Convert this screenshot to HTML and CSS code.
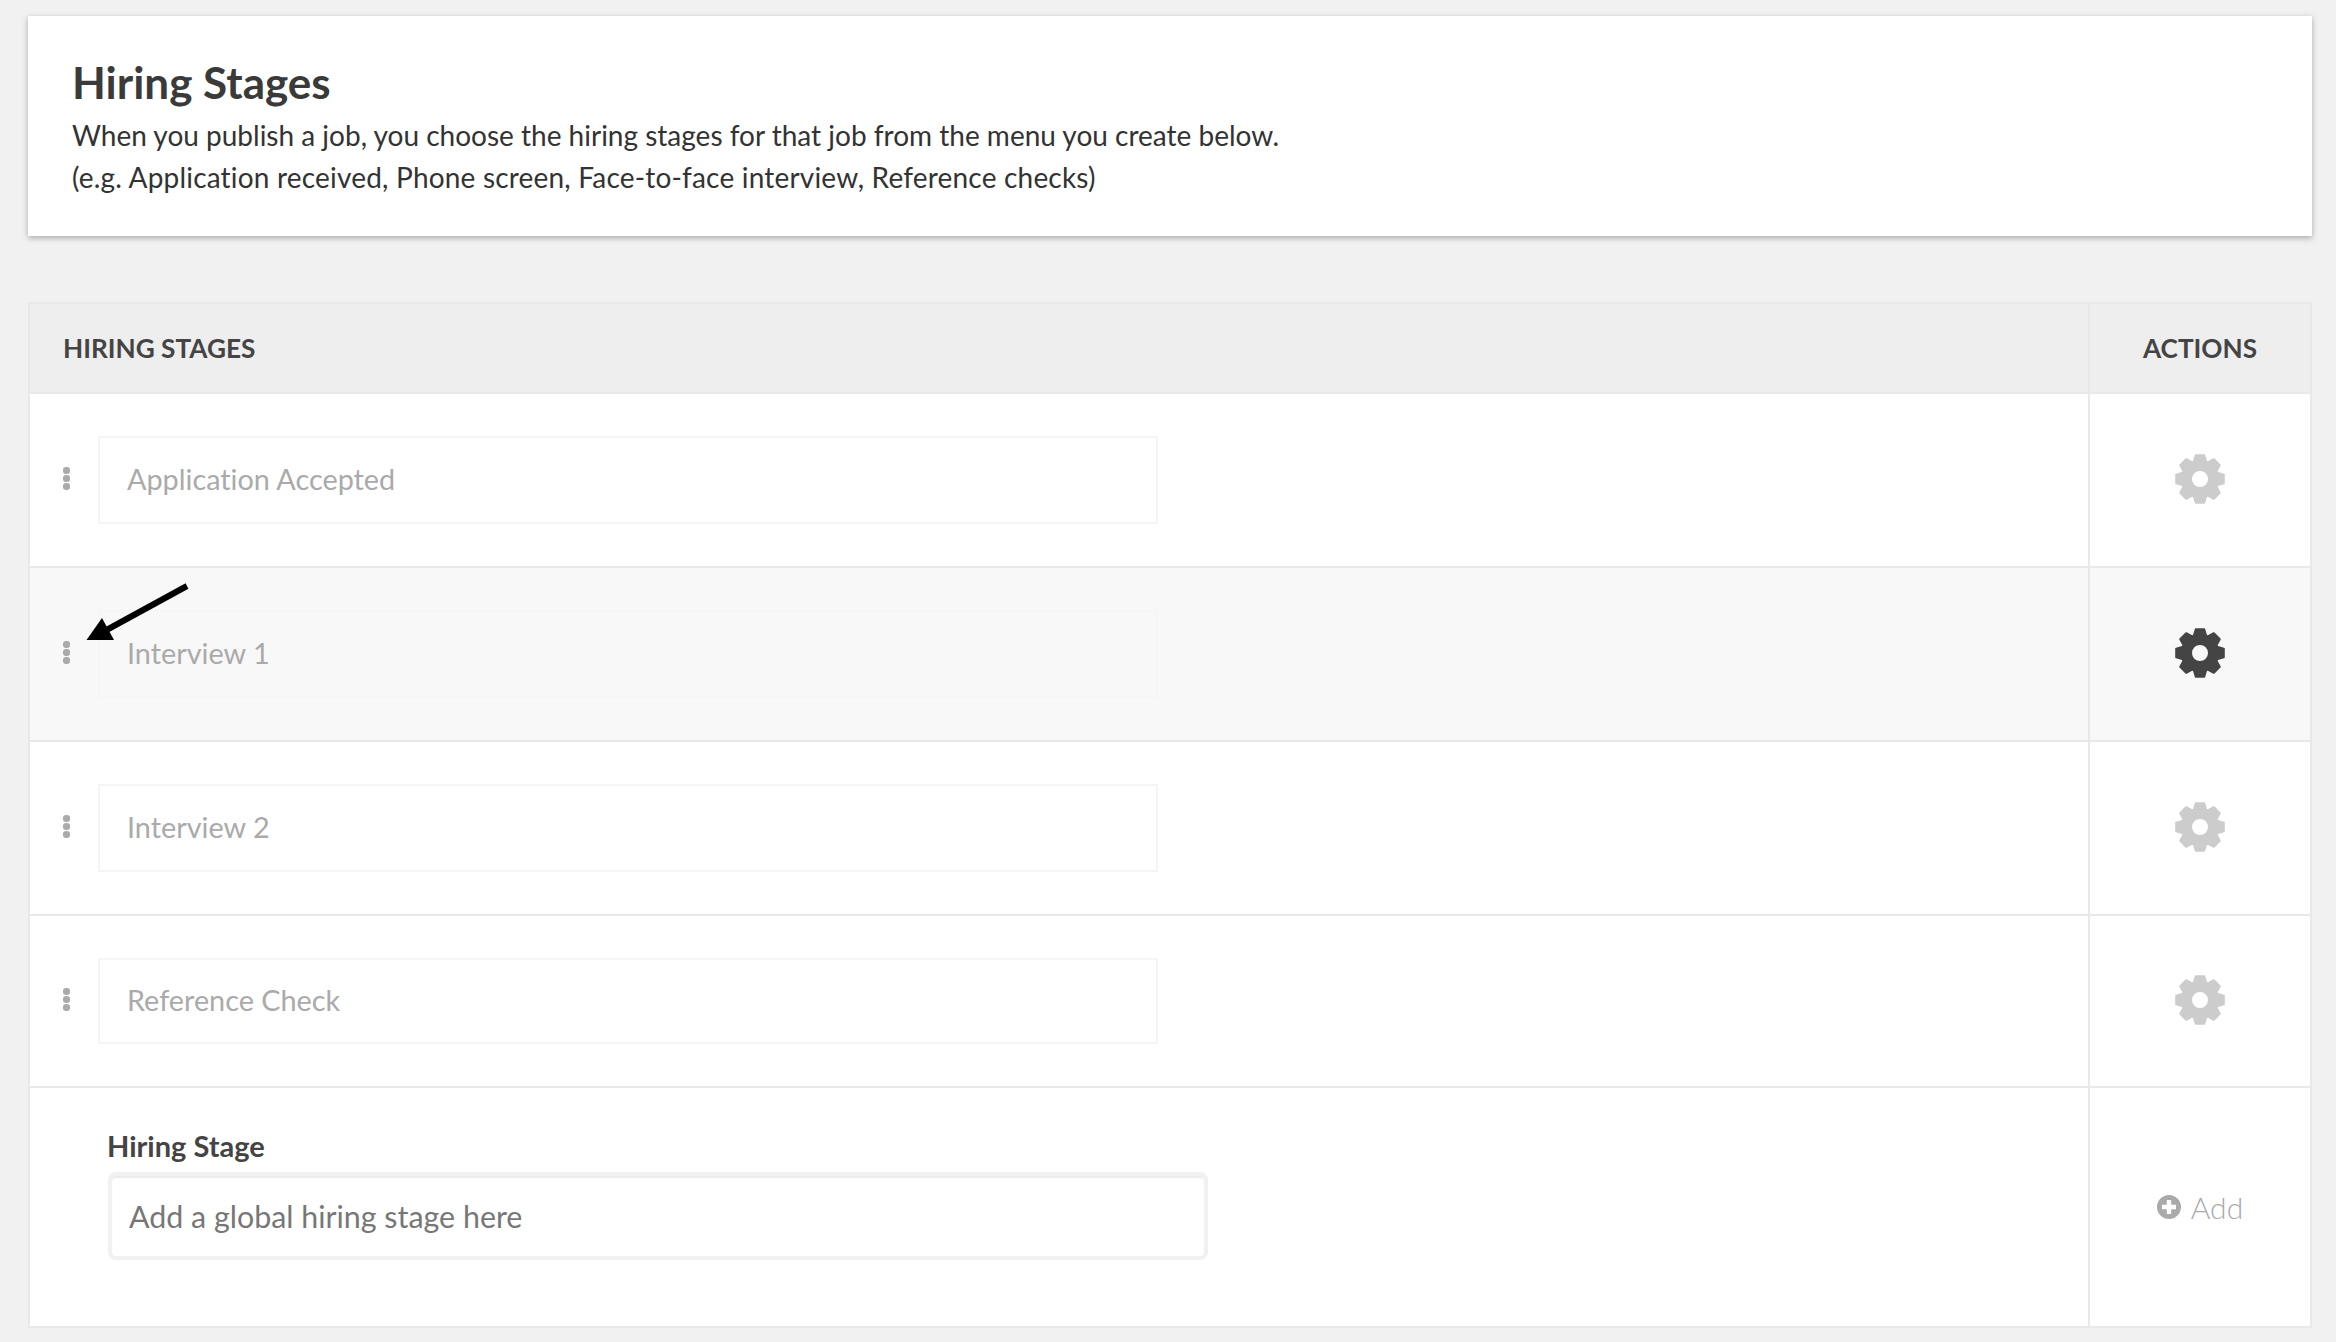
FILE: index.html
```html
<!DOCTYPE html>
<html lang="en">
<head>
<meta charset="utf-8">
<title>Hiring Stages</title>
<link rel="stylesheet" href="styles.css">
</head>
<body>
<svg class="defs" width="0" height="0" aria-hidden="true">
  <symbol id="gear" viewBox="-25 -25 50 50">
    <path fill-rule="evenodd" d="M19.200 0A19.200 19.200 0 1 1-19.200 0A19.200 19.200 0 1 1 19.200 0ZM8 0A8 8 0 1 0-8 0A8 8 0 1 0 8 0Z"/>
    <g id="teeth">
      <path id="tooth" d="M-7.400-16.500L-5.200-24a1 1 0 0 1 1-.8H4.200a1 1 0 0 1 1 .8L7.400-16.500Z"/>
      <use href="#tooth" transform="rotate(45)"/>
      <use href="#tooth" transform="rotate(90)"/>
      <use href="#tooth" transform="rotate(135)"/>
      <use href="#tooth" transform="rotate(180)"/>
      <use href="#tooth" transform="rotate(225)"/>
      <use href="#tooth" transform="rotate(270)"/>
      <use href="#tooth" transform="rotate(315)"/>
    </g>
  </symbol>
</svg>
<main class="page">
  <section class="intro">
    <h1 class="intro-title">Hiring Stages</h1>
    <p class="intro-text">When you publish a job, you choose the hiring stages for that job from the menu you create below.<br><span class="intro-example">(e.g. Application received, Phone screen, Face-to-face interview, Reference checks)</span></p>
  </section>
  <section class="table">
    <div class="row head">
      <div class="cell-main head-main">HIRING STAGES</div>
      <div class="cell-side">ACTIONS</div>
    </div>
    <div class="row stage r1">
      <div class="cell-main"><span class="handle"><i></i><i></i><i></i></span><input class="stage-input" value="Application Accepted"></div>
      <div class="cell-side"><svg class="gear"><use href="#gear"/></svg></div>
    </div>
    <div class="row stage r2 hover">
      <svg class="arrow" width="110" height="60" viewBox="0 0 110 60" aria-hidden="true">
        <path d="M106 3L20 50" stroke="#000" stroke-width="6" fill="none"/>
        <path d="M5.500 57L21 35L33 57Z" fill="#000"/>
      </svg>
      <div class="cell-main"><span class="handle"><i></i><i></i><i></i></span><input class="stage-input" value="Interview 1"></div>
      <div class="cell-side"><svg class="gear"><use href="#gear"/></svg></div>
    </div>
    <div class="row stage r3">
      <div class="cell-main"><span class="handle"><i></i><i></i><i></i></span><input class="stage-input" value="Interview 2"></div>
      <div class="cell-side"><svg class="gear"><use href="#gear"/></svg></div>
    </div>
    <div class="row stage r4">
      <div class="cell-main"><span class="handle"><i></i><i></i><i></i></span><input class="stage-input" value="Reference Check"></div>
      <div class="cell-side"><svg class="gear"><use href="#gear"/></svg></div>
    </div>
    <div class="row add">
      <div class="cell-main add-main">
        <label class="add-label" for="new-stage">Hiring Stage</label>
        <input class="add-input" id="new-stage" placeholder="Add a global hiring stage here">
      </div>
      <div class="cell-side">
        <span class="add-btn">
          <svg class="plus" viewBox="0 0 24 24" aria-hidden="true"><path fill-rule="evenodd" d="M12 0a12 12 0 1 1 0 24a12 12 0 1 1 0-24ZM9.800 5v4.800H5v4.400h4.800V19h4.400v-4.800H19V9.800H14.200V5Z"/></svg>
          Add
        </span>
      </div>
    </div>
  </section>
</main>
</body>
</html>
```
FILE: styles.css
```css
* { box-sizing: border-box; }
html, body { margin: 0; padding: 0; }
body {
  background: #f1f1f1;
  font-family: Lato, "Open Sans", sans-serif;
  font-variant-ligatures: none;
  color: #3d3d3d;
}
.defs { position: absolute; }
.page { padding: 16px 24px 14px 28px; }

.intro {
  height: 220px;
  background: #fff;
  padding: 34px 44px;
  box-shadow: 0 2px 6px rgba(0, 0, 0, 0.3);
}
.intro-title {
  margin: 0;
  font-size: 44px;
  line-height: 64px;
  font-weight: 700;
  color: #3a3a3a;
}
.intro-text {
  margin: 0;
  font-size: 28px;
  line-height: 42px;
  color: #333;
}
.intro-example { letter-spacing: 0.19px; }

.table {
  margin-top: 66px;
  border: 2px solid #e8e8e8;
  background: #fff;
}
.row {
  position: relative;
  display: grid;
  grid-template-columns: 1fr 222px;
  border-bottom: 2px solid #e8e8e8;
}
.row:last-child { border-bottom: 0; }
.cell-main { display: flex; align-items: center; min-width: 0; }
.cell-side {
  display: flex;
  align-items: center;
  justify-content: center;
  border-left: 2px solid #e8e8e8;
}

.head {
  height: 90px;
  background: #eee;
  font-size: 26.2px;
  font-weight: 700;
  color: #444;
}
.head-main { padding-left: 33px; padding-bottom: 1px; }

.stage { height: 174px; }
.r4 { height: 172px; }
.stage .cell-main { padding-left: 33px; gap: 28px; }
.hover { background: #f8f8f8; }

.handle { display: flex; flex-direction: column; gap: 1px; width: 7px; margin-bottom: 3px; }
.handle i { display: block; width: 7px; height: 7px; border-radius: 3px; background: #aaa; }

.stage-input {
  width: 1060px;
  height: 88px;
  padding: 0 27px 2px;
  border: 2px solid #f5f5f5;
  background: transparent;
  font: 400 28.800px Lato, sans-serif;
  font-variant-ligatures: none;
  color: #aaa;
  outline: 0;
}
.r4 .stage-input { height: 86px; }
.hover .stage-input { border-color: #f6f6f6; }

.gear { width: 50px; height: 50px; fill: #ccc; margin-bottom: 3px; }
.hover .gear { fill: #444; }

.arrow { position: absolute; left: 51px; top: 15px; }

.add { height: 238px; }
.add-main {
  flex-direction: column;
  align-items: flex-start;
  padding: 40px 0 0 77px;
}
.add-label {
  font-size: 29px;
  line-height: 36px;
  font-weight: 700;
  color: #444;
}
.add-input {
  width: 1100px;
  height: 88px;
  margin: 8px 0 0 1px;
  padding: 0 17px;
  border: 4px solid #f1f1f1;
  border-radius: 8px;
  box-shadow: inset 0 2px 1px rgba(0, 0, 0, 0.08);
  background: #fff;
  font: 400 30.400px Lato, sans-serif;
  font-variant-ligatures: none;
  outline: 0;
}
.add-input::placeholder { color: #777; opacity: 1; }

.add-btn {
  display: inline-flex;
  align-items: center;
  gap: 10px;
  font-size: 30px;
  font-weight: 300;
  color: #aaa;
}
.plus { width: 24px; height: 24px; fill: #aaa; }
```
